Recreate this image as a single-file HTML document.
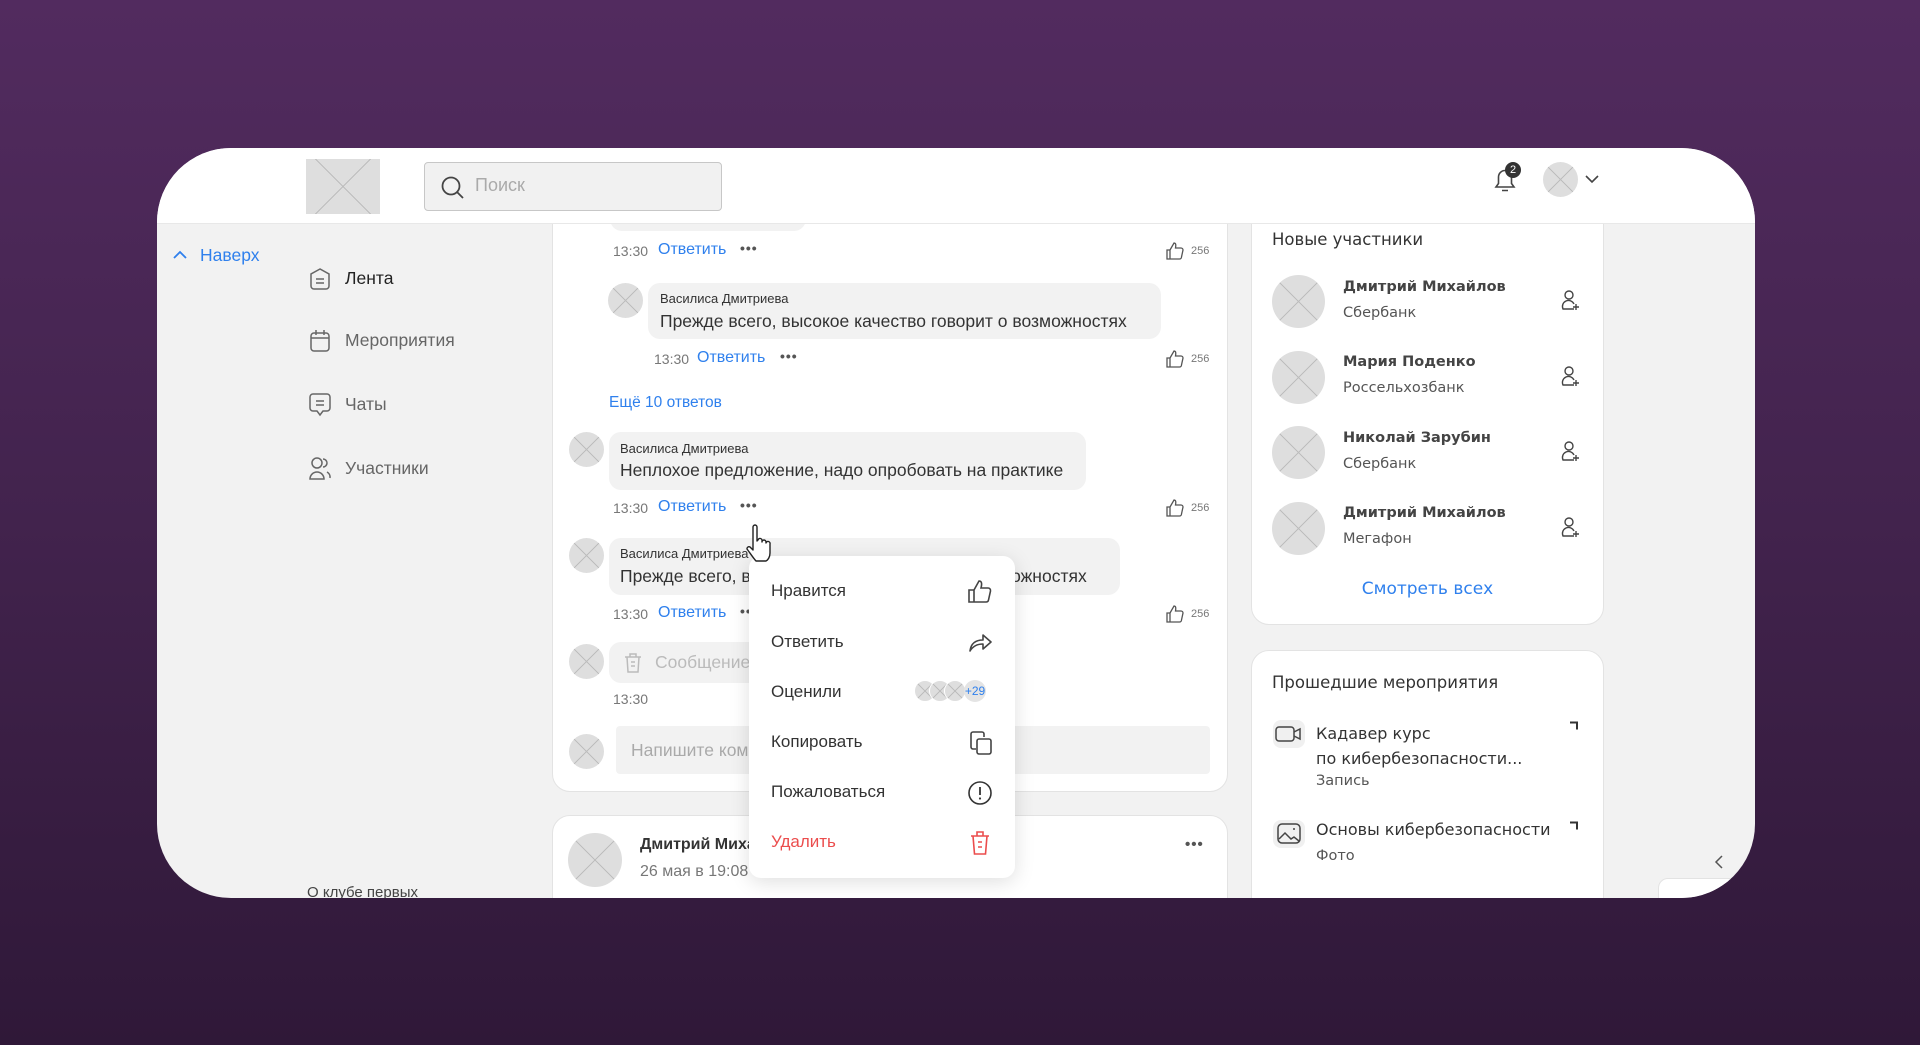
<!DOCTYPE html>
<html><head><meta charset="utf-8">
<style>
*{margin:0;padding:0;box-sizing:border-box}
body{width:1920px;height:1045px;overflow:hidden;background:linear-gradient(180deg,#522b5f 0%,#42234d 50%,#2f1838 100%);font-family:"Liberation Sans",sans-serif;color:#333;position:relative}
#win{position:absolute;left:157px;top:148px;width:1598px;height:750px;border-radius:74px;overflow:hidden;background:#f2f2f2}
#in{position:absolute;left:-157px;top:-148px;width:1920px;height:1045px}
.a{position:absolute}
.ph{background:linear-gradient(45deg,transparent calc(50% - .6px),#bdbdbd calc(50% - .6px),#bdbdbd calc(50% + .6px),transparent calc(50% + .6px)),linear-gradient(-45deg,transparent calc(50% - .6px),#bdbdbd calc(50% - .6px),#bdbdbd calc(50% + .6px),transparent calc(50% + .6px)),#dedede}
.av{border-radius:50%}
.t{position:absolute;white-space:nowrap}
.blue{color:#2f80ed}
.meta{font-size:14px;color:#777}
.bub{position:absolute;background:#f2f2f2;border-radius:12px}
.nm{font-size:13px;color:#333}
.tx{font-size:17.5px;color:#333}
.card{position:absolute;background:#fff;border:1px solid #e3e3e3;border-radius:18px}
.rt{font-family:"DejaVu Sans",sans-serif}
.dots{position:absolute;font-size:14px;letter-spacing:1px;color:#555;font-weight:bold}
.mi{position:absolute;left:771px;font-size:17px;color:#333}
</style></head><body>
<div id="win"><div id="in">
<!-- header -->
<div class="a" style="left:0;top:148px;width:1920px;height:76px;background:#fff;border-bottom:1px solid #e8e8e8;z-index:5"></div>
<div class="a ph" style="left:306px;top:159px;width:74px;height:55px;z-index:6"></div>
<div class="a" style="left:424px;top:162px;width:298px;height:49px;background:#f1f1f1;border:1.5px solid #c7c7c7;border-radius:4px;z-index:6"></div>
<svg class="a" style="left:440px;top:175px;z-index:7" width="26" height="26" viewBox="0 0 26 26"><circle cx="11" cy="11" r="8.5" fill="none" stroke="#444" stroke-width="1.8"/><path d="M17 17l6 6" stroke="#444" stroke-width="1.8"/></svg>
<div class="t" style="left:475px;top:175px;font-size:18px;color:#aaa;z-index:7">Поиск</div>
<svg class="a" style="left:1490px;top:164px;z-index:7" width="30" height="32" viewBox="0 0 30 32"><path d="M6 23h18l-2.5-3.5V13a6.5 6.5 0 0 0-13 0v6.5z" fill="none" stroke="#444" stroke-width="1.6"/><path d="M12 26.5h6" stroke="#444" stroke-width="1.6"/></svg>
<div class="a" style="left:1505px;top:162px;width:16px;height:16px;border-radius:50%;background:#333;color:#fff;font-size:11px;text-align:center;line-height:16px;z-index:8">2</div>
<div class="a ph av" style="left:1543px;top:162px;width:35px;height:35px;z-index:7"></div>
<svg class="a" style="left:1584px;top:173px;z-index:7" width="16" height="12" viewBox="0 0 16 12"><path d="M2 3l6 6 6-6" fill="none" stroke="#444" stroke-width="1.6"/></svg>

<!-- sidebar -->
<svg class="a" style="left:172px;top:249px" width="16" height="12" viewBox="0 0 16 12"><path d="M2 9l6-6 6 6" fill="none" stroke="#2f80ed" stroke-width="1.8"/></svg>
<div class="t blue" style="left:200px;top:245px;font-size:17.5px">Наверх</div>
<svg class="a" style="left:307px;top:266px" width="26" height="26" viewBox="0 0 26 26"><path d="M13 3L4 8v12a3 3 0 0 0 3 3h12a3 3 0 0 0 3-3V8z" fill="none" stroke="#666" stroke-width="1.5"/><path d="M9 13h8M9 17h8" stroke="#666" stroke-width="1.5"/></svg>
<div class="t" style="left:345px;top:268px;font-size:17.5px;color:#222;font-weight:500">Лента</div>
<svg class="a" style="left:307px;top:328px" width="26" height="26" viewBox="0 0 26 26"><rect x="4" y="5" width="18" height="18" rx="3" fill="none" stroke="#666" stroke-width="1.5"/><path d="M4 10h18M9 2v5M17 2v5" stroke="#666" stroke-width="1.5"/></svg>
<div class="t" style="left:345px;top:330px;font-size:17.5px;color:#666">Мероприятия</div>
<svg class="a" style="left:307px;top:391px" width="26" height="28" viewBox="0 0 26 28"><path d="M6 3h14a3 3 0 0 1 3 3v11a3 3 0 0 1-3 3h-4l-3 4-3-4H6a3 3 0 0 1-3-3V6a3 3 0 0 1 3-3z" fill="none" stroke="#666" stroke-width="1.5"/><path d="M9 10h8M9 14h8" stroke="#666" stroke-width="1.5"/></svg>
<div class="t" style="left:345px;top:394px;font-size:17.5px;color:#666">Чаты</div>
<svg class="a" style="left:307px;top:455px" width="26" height="28" viewBox="0 0 26 28"><circle cx="10" cy="8" r="5" fill="none" stroke="#666" stroke-width="1.5"/><path d="M3 24a7 7 0 0 1 14 0z" fill="none" stroke="#666" stroke-width="1.5"/><path d="M16 4a4 4 0 0 1 0 8M20 17a6 6 0 0 1 3 6" fill="none" stroke="#666" stroke-width="1.5"/></svg>
<div class="t" style="left:345px;top:458px;font-size:17.5px;color:#666">Участники</div>
<div class="t" style="left:307px;top:884px;font-size:15px;color:#444">О клубе первых</div>

<!-- feed card 1 -->
<div class="card" style="left:552px;top:180px;width:676px;height:612px"></div>
<div class="bub" style="left:610px;top:205px;width:196px;height:26px"></div>
<div class="t meta" style="left:613px;top:243px">13:30</div>
<div class="t blue" style="left:658px;top:241px;font-size:16px">Ответить</div>
<div class="dots" style="left:740px;top:240px">•••</div>

<div class="a ph av" style="left:608px;top:283px;width:35px;height:35px"></div>
<div class="bub" style="left:648px;top:283px;width:513px;height:56px"></div>
<div class="t nm" style="left:660px;top:291px">Василиса Дмитриева</div>
<div class="t tx" style="left:660px;top:311px">Прежде всего, высокое качество говорит о возможностях</div>
<div class="t meta" style="left:654px;top:351px">13:30</div>
<div class="t blue" style="left:697px;top:349px;font-size:16px">Ответить</div>
<div class="dots" style="left:780px;top:348px">•••</div>

<div class="t blue" style="left:609px;top:394px;font-size:15.5px">Ещё 10 ответов</div>

<div class="a ph av" style="left:569px;top:432px;width:35px;height:35px"></div>
<div class="bub" style="left:609px;top:432px;width:477px;height:58px"></div>
<div class="t nm" style="left:620px;top:441px">Василиса Дмитриева</div>
<div class="t tx" style="left:620px;top:460px">Неплохое предложение, надо опробовать на практике</div>
<div class="t meta" style="left:613px;top:500px">13:30</div>
<div class="t blue" style="left:658px;top:498px;font-size:16px">Ответить</div>
<div class="dots" style="left:740px;top:497px">•••</div>

<div class="a ph av" style="left:569px;top:538px;width:35px;height:35px"></div>
<div class="bub" style="left:609px;top:538px;width:511px;height:57px"></div>
<div class="t nm" style="left:620px;top:546px">Василиса Дмитриева</div>
<div class="t tx" style="left:620px;top:566px">Прежде всего, высокое качество говорит о возможностях</div>
<div class="t meta" style="left:613px;top:606px">13:30</div>
<div class="t blue" style="left:658px;top:604px;font-size:16px">Ответить</div>
<div class="dots" style="left:740px;top:603px">•••</div>

<div class="a ph av" style="left:569px;top:644px;width:35px;height:35px"></div>
<div class="bub" style="left:609px;top:642px;width:260px;height:41px"></div>
<svg class="a" style="left:622px;top:651px" width="22" height="24" viewBox="0 0 22 24"><path d="M3 6h16M8 6V3h6v3M5 6l1 15h10l1-15M9 11h4M9 15h4" fill="none" stroke="#bbb" stroke-width="1.5"/></svg>
<div class="t" style="left:655px;top:652px;font-size:17.5px;color:#bbb">Сообщение удалено</div>
<div class="t meta" style="left:613px;top:691px">13:30</div>

<div class="a ph av" style="left:569px;top:734px;width:35px;height:35px"></div>
<div class="a" style="left:616px;top:726px;width:594px;height:48px;background:#f2f2f2;border-radius:4px"></div>
<div class="t" style="left:631px;top:740px;font-size:17.5px;color:#aaa">Напишите комментарий...</div>

<!-- likes -->
<svg class="a" style="left:1166px;top:241px" width="18" height="20" viewBox="0 0 18 20"><path d="M1 9h3v9H1zM4 9l4-7c2 0 2 2 1.5 5H15a2 2 0 0 1 2 2l-1.5 7a2 2 0 0 1-2 2H4" fill="none" stroke="#555" stroke-width="1.3"/></svg><div class="t" style="left:1191px;top:245px;font-size:11px;color:#777">256</div>
<svg class="a" style="left:1166px;top:349px" width="18" height="20" viewBox="0 0 18 20"><path d="M1 9h3v9H1zM4 9l4-7c2 0 2 2 1.5 5H15a2 2 0 0 1 2 2l-1.5 7a2 2 0 0 1-2 2H4" fill="none" stroke="#555" stroke-width="1.3"/></svg><div class="t" style="left:1191px;top:353px;font-size:11px;color:#777">256</div>
<svg class="a" style="left:1166px;top:498px" width="18" height="20" viewBox="0 0 18 20"><path d="M1 9h3v9H1zM4 9l4-7c2 0 2 2 1.5 5H15a2 2 0 0 1 2 2l-1.5 7a2 2 0 0 1-2 2H4" fill="none" stroke="#555" stroke-width="1.3"/></svg><div class="t" style="left:1191px;top:502px;font-size:11px;color:#777">256</div>
<svg class="a" style="left:1166px;top:604px" width="18" height="20" viewBox="0 0 18 20"><path d="M1 9h3v9H1zM4 9l4-7c2 0 2 2 1.5 5H15a2 2 0 0 1 2 2l-1.5 7a2 2 0 0 1-2 2H4" fill="none" stroke="#555" stroke-width="1.3"/></svg><div class="t" style="left:1191px;top:608px;font-size:11px;color:#777">256</div>

<!-- feed card 2 -->
<div class="card" style="left:552px;top:815px;width:676px;height:200px"></div>
<div class="a ph av" style="left:568px;top:833px;width:54px;height:54px"></div>
<div class="t" style="left:640px;top:836px;font-size:16px;font-weight:bold;color:#333">Дмитрий Михайлов</div>
<div class="t" style="left:640px;top:863px;font-size:16px;color:#777">26 мая в 19:08</div>
<div class="dots" style="left:1185px;top:836px;font-size:15px">•••</div>

<!-- right card 1 -->
<div class="card rt" style="left:1251px;top:195px;width:353px;height:430px"></div>
<div class="t rt" style="left:1272px;top:230px;font-size:16.5px;color:#333">Новые участники</div>
<div class="a ph av" style="left:1272px;top:275px;width:53px;height:53px"></div>
<div class="a ph av" style="left:1272px;top:351px;width:53px;height:53px"></div>
<div class="a ph av" style="left:1272px;top:426px;width:53px;height:53px"></div>
<div class="a ph av" style="left:1272px;top:502px;width:53px;height:53px"></div>
<div class="t rt" style="left:1343px;top:279px;font-size:14.5px;font-weight:bold;color:#444">Дмитрий Михайлов</div>
<div class="t rt" style="left:1343px;top:305px;font-size:14.5px;color:#555">Сбербанк</div>
<div class="t rt" style="left:1343px;top:354px;font-size:14.5px;font-weight:bold;color:#444">Мария Поденко</div>
<div class="t rt" style="left:1343px;top:380px;font-size:14.5px;color:#555">Россельхозбанк</div>
<div class="t rt" style="left:1343px;top:430px;font-size:14.5px;font-weight:bold;color:#444">Николай Зарубин</div>
<div class="t rt" style="left:1343px;top:456px;font-size:14.5px;color:#555">Сбербанк</div>
<div class="t rt" style="left:1343px;top:505px;font-size:14.5px;font-weight:bold;color:#444">Дмитрий Михайлов</div>
<div class="t rt" style="left:1343px;top:531px;font-size:14.5px;color:#555">Мегафон</div>
<svg class="a" style="left:1559px;top:289px" width="22" height="24" viewBox="0 0 22 24"><circle cx="10" cy="6" r="4" fill="none" stroke="#444" stroke-width="1.4"/><path d="M15 20H4a6 6 0 0 1 11-5M17 15v6M14 18h6" fill="none" stroke="#444" stroke-width="1.4"/></svg>
<svg class="a" style="left:1559px;top:365px" width="22" height="24" viewBox="0 0 22 24"><circle cx="10" cy="6" r="4" fill="none" stroke="#444" stroke-width="1.4"/><path d="M15 20H4a6 6 0 0 1 11-5M17 15v6M14 18h6" fill="none" stroke="#444" stroke-width="1.4"/></svg>
<svg class="a" style="left:1559px;top:440px" width="22" height="24" viewBox="0 0 22 24"><circle cx="10" cy="6" r="4" fill="none" stroke="#444" stroke-width="1.4"/><path d="M15 20H4a6 6 0 0 1 11-5M17 15v6M14 18h6" fill="none" stroke="#444" stroke-width="1.4"/></svg>
<svg class="a" style="left:1559px;top:516px" width="22" height="24" viewBox="0 0 22 24"><circle cx="10" cy="6" r="4" fill="none" stroke="#444" stroke-width="1.4"/><path d="M15 20H4a6 6 0 0 1 11-5M17 15v6M14 18h6" fill="none" stroke="#444" stroke-width="1.4"/></svg>
<div class="t rt blue" style="left:1251px;width:353px;text-align:center;top:579px;font-size:17px">Смотреть всех</div>

<!-- right card 2 -->
<div class="card rt" style="left:1251px;top:650px;width:353px;height:300px"></div>
<div class="t rt" style="left:1272px;top:673px;font-size:16.5px;color:#333">Прошедшие мероприятия</div>
<div class="a" style="left:1273px;top:720px;width:32px;height:28px;background:#f0f0f0;border-radius:8px"></div>
<svg class="a" style="left:1275px;top:724px" width="28" height="20" viewBox="0 0 28 20"><rect x="1" y="3" width="18" height="14" rx="3" fill="none" stroke="#444" stroke-width="1.5"/><path d="M19 8l6-3v10l-6-3" fill="none" stroke="#444" stroke-width="1.5"/></svg>
<div class="t rt" style="left:1316px;top:721px;font-size:16px;color:#333;line-height:25px">Кадавер курс<br>по кибербезопасности...</div>
<div class="t rt" style="left:1316px;top:773px;font-size:14.5px;color:#555">Запись</div>
<svg class="a" style="left:1569px;top:721px" width="10" height="10" viewBox="0 0 10 10"><path d="M1 1.5h7v7" fill="none" stroke="#333" stroke-width="2"/></svg>
<div class="a" style="left:1273px;top:820px;width:32px;height:28px;background:#f0f0f0;border-radius:8px"></div>
<svg class="a" style="left:1277px;top:823px" width="24" height="22" viewBox="0 0 24 22"><rect x="1" y="1" width="22" height="19" rx="4" fill="none" stroke="#444" stroke-width="1.5"/><path d="M2 16l6-6 6 6 3-2 5 4" fill="none" stroke="#444" stroke-width="1.5"/><circle cx="17" cy="6" r="1" fill="#444"/></svg>
<div class="t rt" style="left:1316px;top:820px;font-size:16px;color:#333">Основы кибербезопасности</div>
<div class="t rt" style="left:1316px;top:848px;font-size:14.5px;color:#555">Фото</div>
<svg class="a" style="left:1569px;top:821px" width="10" height="10" viewBox="0 0 10 10"><path d="M1 1.5h7v7" fill="none" stroke="#333" stroke-width="2"/></svg>

<svg class="a" style="left:1712px;top:854px" width="14" height="16" viewBox="0 0 14 16"><path d="M10 2L4 8l6 6" fill="none" stroke="#555" stroke-width="1.5"/></svg>
<div class="a" style="left:1658px;top:878px;width:80px;height:40px;background:#fff;border-radius:10px;border:1px solid #e3e3e3"></div>

<!-- context menu -->
<div class="a" style="left:749px;top:556px;width:266px;height:322px;background:#fff;border-radius:12px;box-shadow:0 4px 20px rgba(0,0,0,.13);z-index:3"></div>
<div style="position:absolute;left:0;top:0;z-index:4">
<div class="mi" style="top:581px">Нравится</div>
<div class="mi" style="top:632px">Ответить</div>
<div class="mi" style="top:682px">Оценили</div>
<div class="mi" style="top:732px">Копировать</div>
<div class="mi" style="top:782px">Пожаловаться</div>
<div class="mi" style="top:832px;color:#eb4d4d">Удалить</div>
<svg class="a" style="left:967px;top:579px" width="26" height="26" viewBox="0 0 26 26"><path d="M2 11h5v12H2zM7 11l5-9c3 0 3 3 2 7h7a2.5 2.5 0 0 1 2.5 3l-2 9a2.5 2.5 0 0 1-2.5 2H7" fill="none" stroke="#444" stroke-width="1.6"/></svg>
<svg class="a" style="left:967px;top:630px" width="26" height="24" viewBox="0 0 26 24"><path d="M3 21c1-8 6-11 13-11V5l8 7-8 7v-5c-6 0-10 2-13 7z" fill="none" stroke="#444" stroke-width="1.6" stroke-linejoin="round"/></svg>
<div class="a ph av" style="left:914px;top:680px;width:22px;height:22px;border:1px solid #fff"></div>
<div class="a ph av" style="left:929px;top:680px;width:22px;height:22px;border:1px solid #fff"></div>
<div class="a ph av" style="left:944px;top:680px;width:22px;height:22px;border:1px solid #fff"></div>
<div class="a av" style="left:964px;top:680px;width:22px;height:22px;background:#e4e4e4;color:#2f80ed;font-size:12px;text-align:center;line-height:22px">+29</div>
<svg class="a" style="left:968px;top:730px" width="26" height="26" viewBox="0 0 26 26"><path d="M8 19H5a2 2 0 0 1-2-2V4a2 2 0 0 1 2-2h9a2 2 0 0 1 2 2v3" fill="none" stroke="#444" stroke-width="1.6"/><rect x="9" y="9" width="14" height="15" rx="2" fill="none" stroke="#444" stroke-width="1.6"/></svg>
<svg class="a" style="left:967px;top:780px" width="26" height="26" viewBox="0 0 26 26"><circle cx="13" cy="13" r="11" fill="none" stroke="#333" stroke-width="1.6"/><path d="M13 7v8" stroke="#333" stroke-width="1.8"/><circle cx="13" cy="18.5" r="1.1" fill="#333"/></svg>
<svg class="a" style="left:968px;top:829px" width="24" height="28" viewBox="0 0 24 28"><path d="M3 7h18M9 7V3h6v4M5 7l1.5 18h11L19 7M10 13h4M10 18h4" fill="none" stroke="#eb4d4d" stroke-width="1.6"/></svg>
</div>
<!-- cursor -->
<svg class="a" style="left:744px;top:524px;z-index:9" width="30" height="40" viewBox="0 0 30 40"><path d="M9 3a2 2 0 0 1 4 0v14l1-1a2 2 0 0 1 4 1v1a2 2 0 0 1 4 0v1a2 2 0 0 1 4 1v9c0 4-2 7-4 8H12c-2-2-6-8-9-12a2 2 0 0 1 3-2l3 3z" fill="#fff" stroke="#222" stroke-width="1.4" stroke-linejoin="round"/></svg>
</div></div>
</body></html>
